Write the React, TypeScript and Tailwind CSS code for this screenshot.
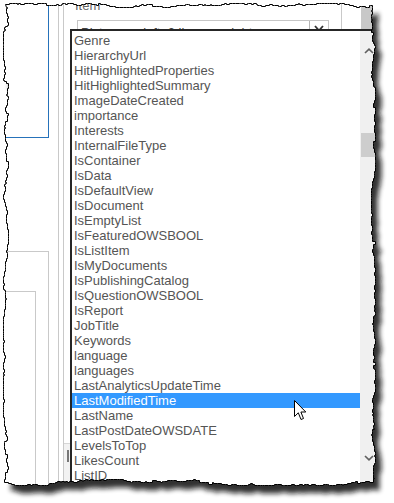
import React from "react";

const items = [
  "Genre",
  "HierarchyUrl",
  "HitHighlightedProperties",
  "HitHighlightedSummary",
  "ImageDateCreated",
  "importance",
  "Interests",
  "InternalFileType",
  "IsContainer",
  "IsData",
  "IsDefaultView",
  "IsDocument",
  "IsEmptyList",
  "IsFeaturedOWSBOOL",
  "IsListItem",
  "IsMyDocuments",
  "IsPublishingCatalog",
  "IsQuestionOWSBOOL",
  "IsReport",
  "JobTitle",
  "Keywords",
  "language",
  "languages",
  "LastAnalyticsUpdateTime",
  "LastModifiedTime",
  "LastName",
  "LastPostDateOWSDATE",
  "LevelsToTop",
  "LikesCount",
  "ListID",
];

const selected = "LastModifiedTime";

// deterministic jagged outline for the torn-paper frame
function makeTorn() {
  let s = 12345;
  const rnd = () => {
    s = (s * 16807) % 2147483647;
    return s / 2147483647;
  };
  const pts: [number, number][] = [];
  const L = 5,
    T = 5,
    R = 373,
    B = 482;
  let v = 0;
  const jig = (amp: number) => {
    v += (rnd() - 0.5) * 2.6;
    if (rnd() < 0.1) v += (rnd() - 0.5) * 4;
    v = Math.max(-amp, Math.min(amp, v));
    return Math.round(v);
  };
  // stepped points, so the edge looks pixel-torn like the screenshot
  for (let x = L; x < R; x += 1 + Math.round(rnd() * 3)) {
    const y = T + jig(2);
    const p = pts[pts.length - 1];
    if (p) pts.push([x, p[1]]);
    pts.push([x, y]);
  }
  for (let y = T; y < B; y += 1 + Math.round(rnd() * 3)) {
    const x = R + jig(2);
    const p = pts[pts.length - 1];
    if (p) pts.push([p[0], y]);
    pts.push([x, y]);
  }
  for (let x = R; x > L; x -= 1 + Math.round(rnd() * 3)) {
    const y = B + jig(3);
    const p = pts[pts.length - 1];
    if (p) pts.push([x, p[1]]);
    pts.push([x, y]);
  }
  for (let y = B; y > T; y -= 1 + Math.round(rnd() * 3)) {
    const x = L + jig(2.5);
    const p = pts[pts.length - 1];
    if (p) pts.push([p[0], y]);
    pts.push([x, y]);
  }
  return "M" + pts.map(([x, y]) => `${x + 0.5} ${y + 0.5}`).join(" L") + " Z";
}

const torn = makeTorn();

const TornFrame = () => (
  <svg
    className="pointer-events-none absolute left-0 top-0"
    width={394}
    height={503}
    viewBox="0 0 394 503"
  >
    <defs>
      <filter id="blur" x="-10%" y="-10%" width="120%" height="120%">
        <feGaussianBlur stdDeviation="2.6" />
      </filter>
      <clipPath id="outside">
        <path d={`M0 0H394V503H0Z ${torn}`} clipRule="evenodd" />
      </clipPath>
    </defs>
    <path d={`M0 0H394V503H0Z ${torn}`} fill="#fff" fillRule="evenodd" />
    <g clipPath="url(#outside)">
      <path
        d={torn}
        transform="translate(6 8)"
        fill="#111"
        opacity={0.85}
        filter="url(#blur)"
      />
    </g>
    <path d={torn} fill="none" stroke="#000" strokeWidth={1} />
  </svg>
);

const Cursor = () => (
  <svg
    className="pointer-events-none absolute left-[294px] top-[400px]"
    width={13}
    height={21}
    viewBox="0 0 13 21"
  >
    <path
      d="M0.5 0.5 L0.5 16.5 L4.3 12.8 L7 19.5 L9.5 18.5 L6.9 12 L11.8 12 Z"
      fill="#fff"
      stroke="#000"
      strokeWidth={1}
    />
  </svg>
);

export default function App() {
  return (
    <div
      className="relative flex h-[503px] w-[394px] overflow-hidden bg-white text-[13px] text-[#555]"
      style={{ fontFamily: '"Liberation Sans", Arial, sans-serif' }}
    >
      {/* left page panels */}
      <div className="flex h-full w-[70px] shrink-0">
        <div className="flex h-full w-[59px] flex-col border-r border-[#c9c9c9]">
          <div className="h-[138px] w-[49px] border-b border-r border-[#2672ba]" />
          <div className="h-[113px]" />
          <div className="w-[49px] flex-1 border-r border-t border-[#c9c9c9] pt-[39px]">
            <div className="h-full w-[36px] border-r border-t border-[#c9c9c9]" />
          </div>
        </div>
        <div className="h-full w-[5px] border-r border-[#c9c9c9]" />
        <div className="flex flex-1 flex-col justify-end">
          <div className="mb-[20px] flex h-[40px] items-start border-t border-[#d6d6d6] bg-[#f2f2f2] pl-[3px] pt-[6px]">
            <div className="h-[12px] w-[2px] bg-[#777]" />
          </div>
        </div>
      </div>

      {/* right column */}
      <div className="flex min-w-0 flex-1 flex-col">
        <div className="flex h-[29px] shrink-0 overflow-hidden">
          <div className="w-[272px] shrink-0 border-r border-[#c9c9c9]">
            <div className="-mt-[2px] pl-[5px] leading-[15px] text-[#666]">Item</div>
            <div className="ml-[7px] mt-[7px] flex h-[22px] w-[252px] border border-[#c6c6c6]">
              <div className="flex-1 whitespace-nowrap pl-[3px] pt-[4px] leading-[15px] text-[#444]">
                Picture on left, 3 lines on right
              </div>
              <div className="flex h-full w-[19px] items-start justify-center border-l border-[#b5b5b5] pt-[4px]">
                <svg width={10} height={7} viewBox="0 0 10 7">
                  <path d="M1 1 L5 5.5 L9 1" fill="none" stroke="#333" strokeWidth={1.8} />
                </svg>
              </div>
            </div>
          </div>
          <div className="w-[19px] shrink-0" />
          <div className="w-[17px] shrink-0 bg-[#c8c8c8]" />
        </div>

        {/* open dropdown */}
        <div className="flex min-h-0 flex-1 overflow-hidden border-l-2 border-t-2 border-[#262626]">
          <div className="w-[288px] shrink-0 pt-[2px]">
            {items.map((it) => (
              <div
                key={it}
                className={
                  it === selected
                    ? "h-[15px] whitespace-nowrap bg-[#3399ff] pl-[2px] leading-[15px] text-white"
                    : "h-[15px] whitespace-nowrap pl-[2px] leading-[15px]"
                }
              >
                {it}
              </div>
            ))}
          </div>
          <div className="flex w-[17px] shrink-0 flex-col items-center bg-[#f0f0f0]">
            <svg className="mt-[17px]" width={10} height={6} viewBox="0 0 10 6">
              <path d="M1 5 L5 1.2 L9 5" fill="none" stroke="#606060" strokeWidth={1.7} />
            </svg>
            <div className="ml-[1px] mt-[79px] h-[24px] self-stretch bg-[#cdcdcd]" />
            <div className="flex-1" />
            <svg className="mb-[42px]" width={10} height={6} viewBox="0 0 10 6">
              <path d="M1 1 L5 4.8 L9 1" fill="none" stroke="#606060" strokeWidth={1.7} />
            </svg>
          </div>
          <div className="flex-1" />
        </div>
      </div>

      <Cursor />
      <TornFrame />
    </div>
  );
}
